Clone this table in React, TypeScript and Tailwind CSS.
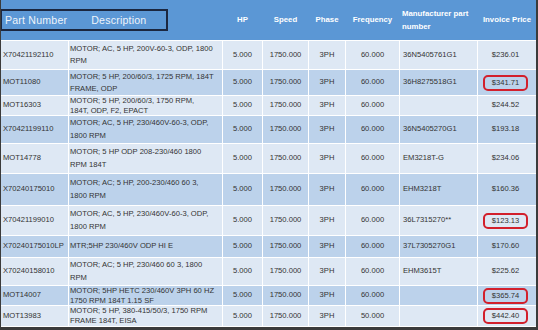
import React from "react";

type Row = {
  pn: string;
  d: string[];
  mfr: string;
  price: string;
  freq: string;
  h: string;
  lh: string;
  mid: boolean;
  mark: boolean;
};

const rows: Row[] = [
  { pn: "X70421192110", d: ["MOTOR; AC, 5 HP, 200V-60-3, ODP, 1800", "RPM"], mfr: "36N5405761G1", price: "$236.01", freq: "60.000", h: "h-[28px]", lh: "leading-[12.5px]", mid: false, mark: false },
  { pn: "MOT11080", d: ["MOTOR; 5 HP, 200/60/3, 1725 RPM, 184T", "FRAME, ODP"], mfr: "36H8275518G1", price: "$341.71", freq: "60.000", h: "h-[25px]", lh: "leading-[12px]", mid: true, mark: true },
  { pn: "MOT16303", d: ["MOTOR; 5 HP, 200/60/3, 1750 RPM,", "184T, ODP, F2, EPACT"], mfr: "", price: "$244.52", freq: "60.000", h: "h-[19px]", lh: "leading-[9.5px]", mid: false, mark: false },
  { pn: "X70421199110", d: ["MOTOR; AC, 5 HP, 230/460V-60-3, ODP,", "1800 RPM"], mfr: "36N5405270G1", price: "$193.18", freq: "60.000", h: "h-[27px]", lh: "leading-[12.5px]", mid: true, mark: false },
  { pn: "MOT14778", d: ["MOTOR; 5 HP ODP 208-230/460 1800", "RPM 184T"], mfr: "EM3218T-G", price: "$234.06", freq: "60.000", h: "h-[29px]", lh: "leading-[12.5px]", mid: false, mark: false },
  { pn: "X70240175010", d: ["MOTOR; AC; 5 HP, 200-230/460 60 3,", "1800 RPM"], mfr: "EHM3218T", price: "$160.36", freq: "60.000", h: "h-[31px]", lh: "leading-[12.5px]", mid: true, mark: false },
  { pn: "X70421199010", d: ["MOTOR; AC, 5 HP, 230/460V-60-3, ODP,", "1800 RPM"], mfr: "36L7315270**", price: "$123.13", freq: "60.000", h: "h-[29px]", lh: "leading-[12.5px]", mid: false, mark: true },
  { pn: "X70240175010LP", d: ["MTR;5HP 230/460V ODP HI E"], mfr: "37L7305270G1", price: "$170.60", freq: "60.000", h: "h-[21px]", lh: "leading-[12.5px]", mid: true, mark: false },
  { pn: "X70240158010", d: ["MOTOR; AC; 5 HP, 230/460 60 3, 1800", "RPM"], mfr: "EHM3615T", price: "$225.62", freq: "60.000", h: "h-[27px]", lh: "leading-[12.5px]", mid: false, mark: false },
  { pn: "MOT14007", d: ["MOTOR; 5HP HETC 230/460V 3PH 60 HZ", "1750 RPM 184T 1.15 SF"], mfr: "", price: "$365.74", freq: "60.000", h: "h-[19px]", lh: "leading-[9.5px]", mid: true, mark: true },
  { pn: "MOT13983", d: ["MOTOR; 5 HP, 380-415/50/3, 1750 RPM", "FRAME 184T, EISA"], mfr: "", price: "$442.40", freq: "50.000", h: "h-[20px]", lh: "leading-[10px]", mid: false, mark: true },
];

const cols = "grid grid-cols-[67px_153px_39px_45px_36px_53px_77px_1fr] gap-x-px";

export default function App() {
  return (
    <div
      className="w-[538px] h-[330px] overflow-hidden bg-white border-l border-r-2 border-b-[3px] border-[#3b3b3b] text-[#333333]"
      style={{ fontFamily: '"Liberation Sans", Arial, sans-serif' }}
    >
      {/* header */}
      <div className={`${cols} h-[40px] bg-[#5b97d5] text-white font-bold text-[7.8px] leading-[12px]`}>
        <div className="col-span-2 flex items-center -ml-px">
          <div className="w-[168px] h-[22px] border-2 border-[#1b2740] flex items-center text-[10.6px] font-normal text-[#eef4fb] tracking-[0.2px]">
            <span className="pl-[3px]">Part Number</span>
            <span className="pl-[24px]">Description</span>
          </div>
        </div>
        <div className="flex items-center justify-center">HP</div>
        <div className="flex items-center justify-center">Speed</div>
        <div className="flex items-center justify-center">Phase</div>
        <div className="flex items-center justify-center">Frequency</div>
        <div className="flex items-center pl-[2px] leading-[13px]">
          <span>
            Manufacturer part
            <br />
            number
          </span>
        </div>
        <div className="flex items-center justify-center">Invoice Price</div>
      </div>

      {/* body */}
      <div className="flex flex-col gap-y-px pt-px pb-px bg-white text-[7.6px] leading-[12.5px]">
        {rows.map((r) => {
          const bg = r.mid ? "bg-[#bcd2eb]" : "bg-[#dee8f4]";
          return (
            <div key={r.pn} className={`${cols} ${r.h}`}>
              <div className={`${bg} flex items-center pl-[2px] overflow-hidden whitespace-nowrap`}>{r.pn}</div>
              <div className={`${bg} flex items-center pl-[1px] overflow-hidden whitespace-nowrap ${r.lh}`}>
                <span>
                  {r.d.map((line, i) => (
                    <React.Fragment key={i}>
                      {i > 0 && <br />}
                      {line}
                    </React.Fragment>
                  ))}
                </span>
              </div>
              <div className={`${bg} flex items-center justify-center`}>5.000</div>
              <div className={`${bg} flex items-center justify-center`}>1750.000</div>
              <div className={`${bg} flex items-center justify-center`}>3PH</div>
              <div className={`${bg} flex items-center justify-center`}>{r.freq}</div>
              <div className={`${bg} flex items-center pl-[3px] whitespace-nowrap`}>{r.mfr}</div>
              <div className={`${bg} flex items-center justify-center pr-[3px]`}>
                {r.mark ? (
                  <span className="inline-block border-[2.5px] border-[#d2202c] rounded-[5px] px-[7px] leading-[12px]">
                    {r.price}
                  </span>
                ) : (
                  <span>{r.price}</span>
                )}
              </div>
            </div>
          );
        })}
      </div>
    </div>
  );
}
